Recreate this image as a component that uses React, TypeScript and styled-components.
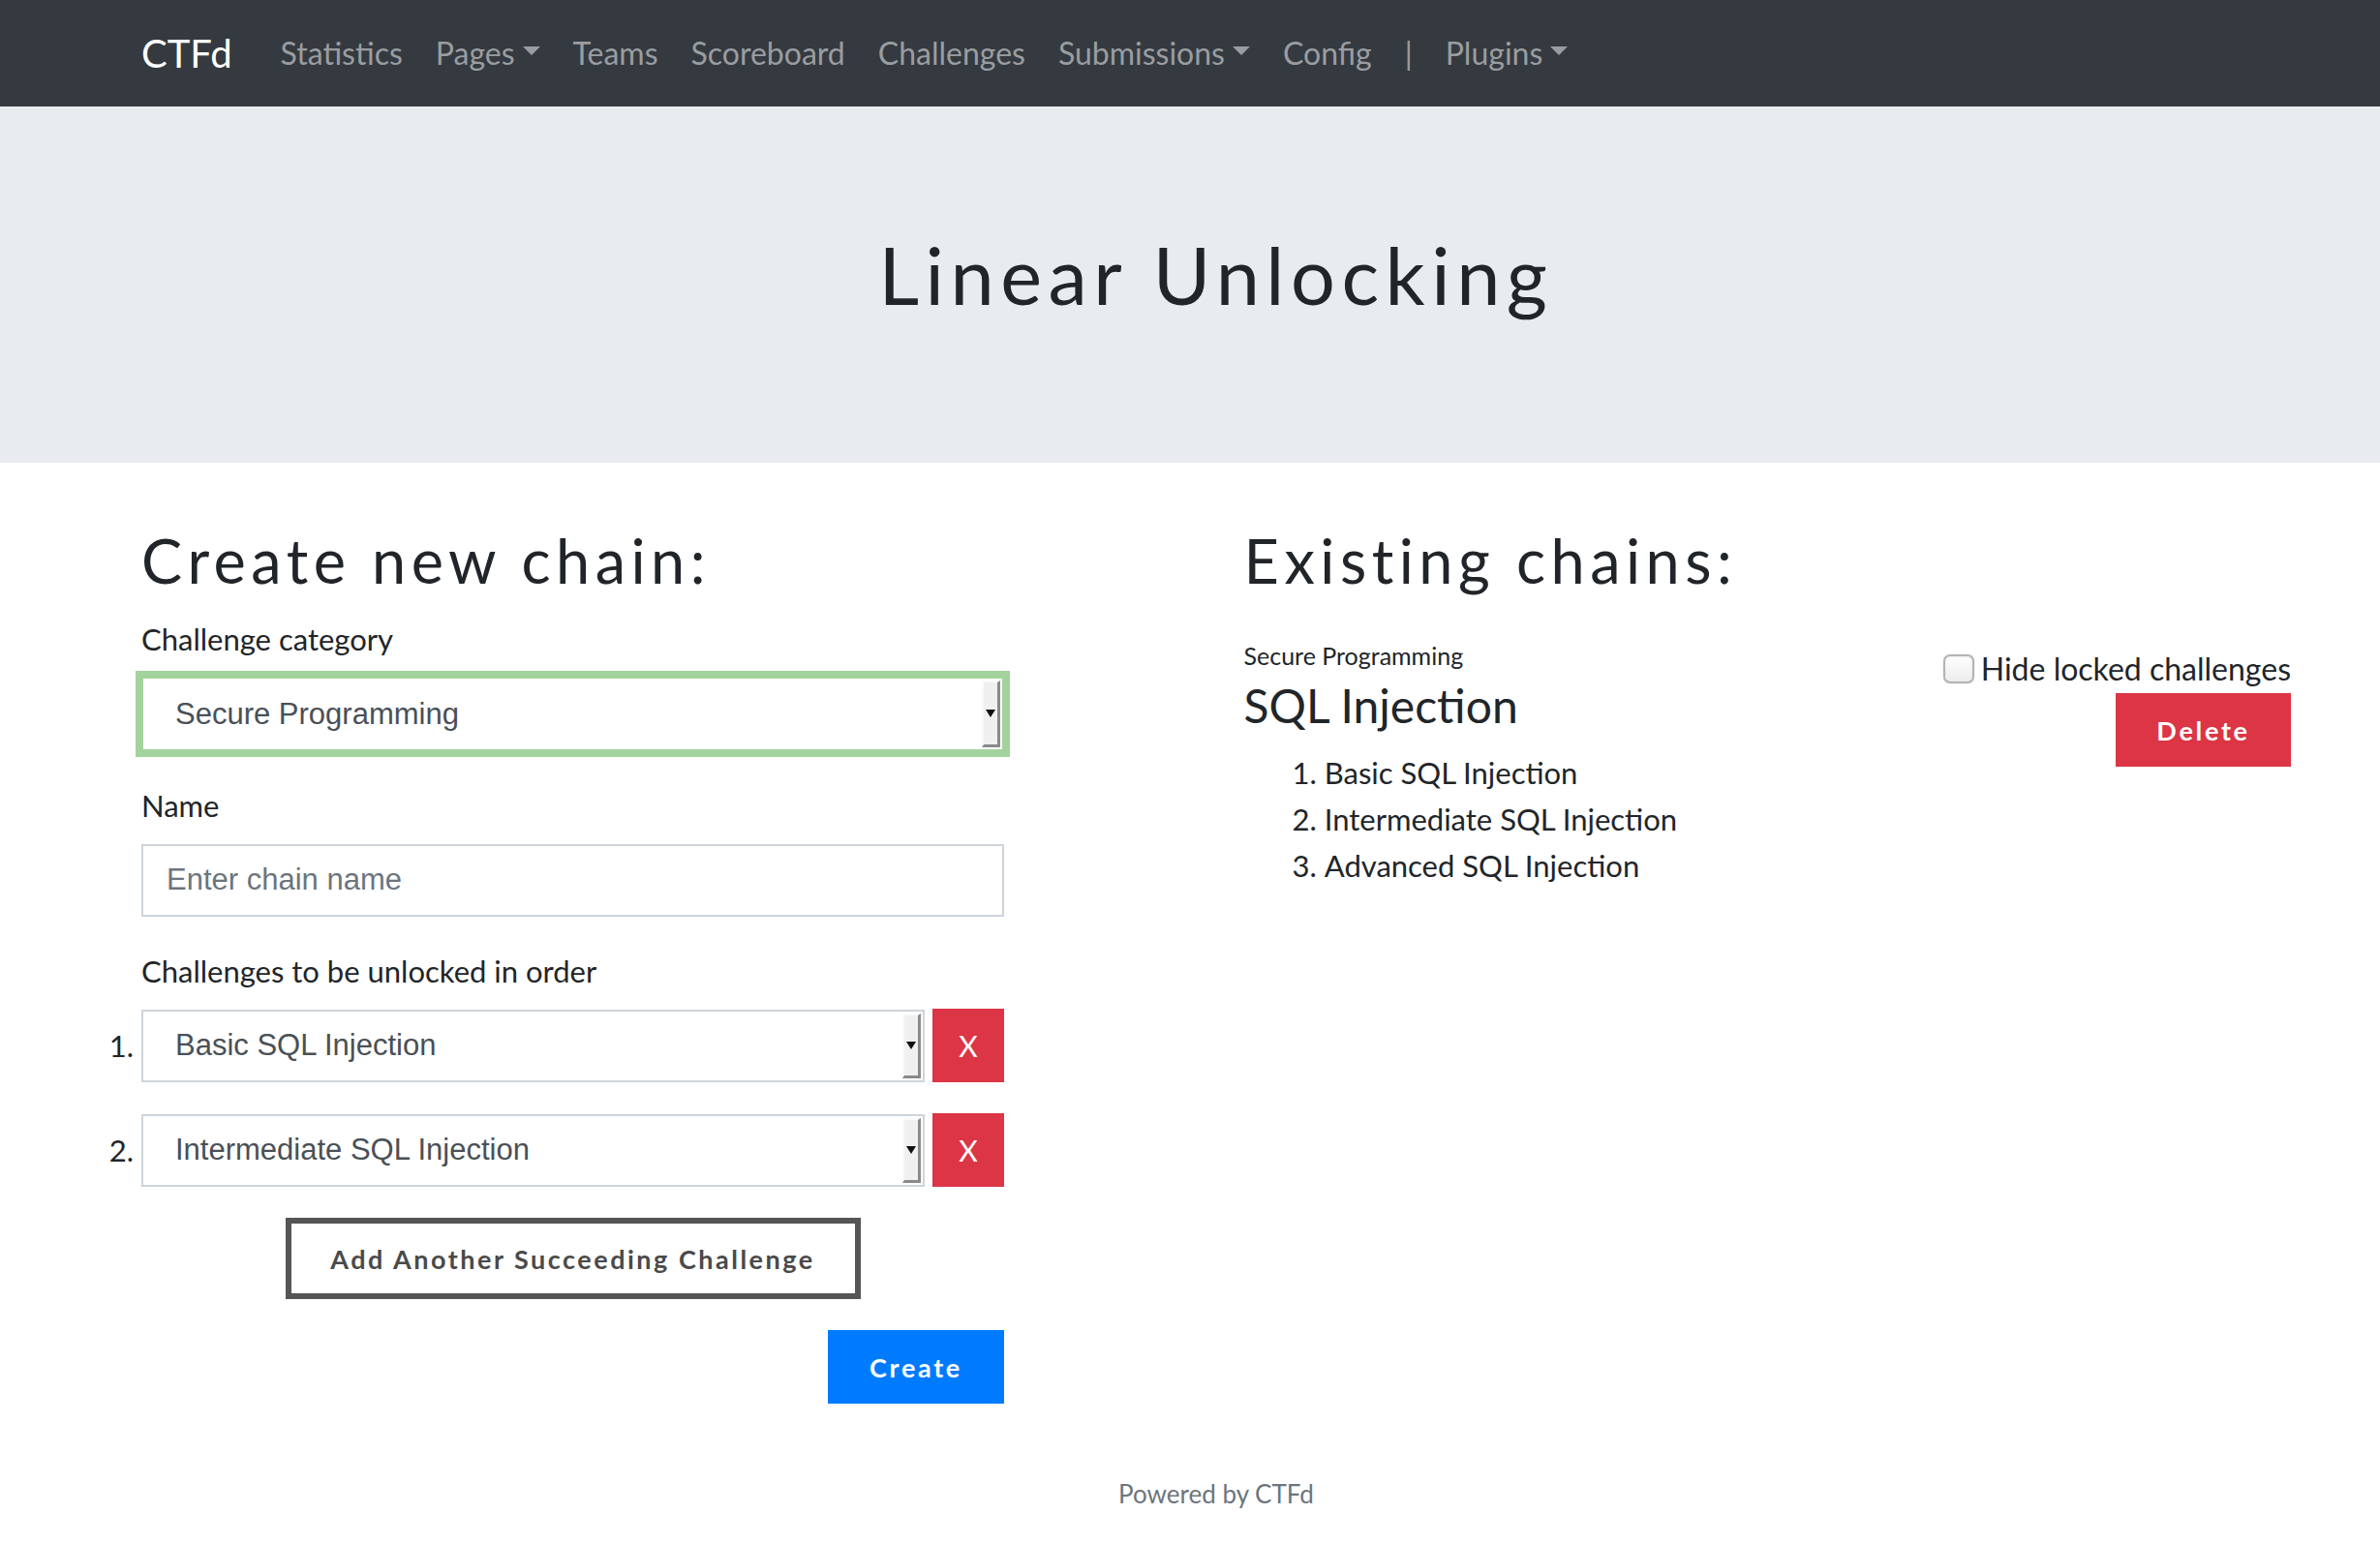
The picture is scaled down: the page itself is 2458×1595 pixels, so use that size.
import React from "react";
import styled, { createGlobalStyle } from "styled-components";

const GlobalStyle = createGlobalStyle`
  html, body {
    margin: 0;
    padding: 0;
    background: #ffffff;
  }
  body {
    font-family: Lato, "Noto Sans", "Liberation Sans", sans-serif;
    color: #212529;
    -webkit-font-smoothing: antialiased;
  }
  * { box-sizing: border-box; }
`;

const Page = styled.div`
  width: 2458px;
  min-height: 1595px;
  display: flex;
  flex-direction: column;
`;

const Container = styled.div`
  padding-left: 146px;
  padding-right: 92px;
`;

const NavBar = styled.nav`
  height: 110px;
  background: #343a40;
`;

const NavInner = styled(Container)`
  height: 100%;
  display: flex;
  align-items: center;
`;

const Brand = styled.a`
  font-size: 40px;
  line-height: 1.5;
  color: #ffffff;
  margin-right: 33px;
  text-decoration: none;
`;

const NavLink = styled.a<{ $dropdown?: boolean }>`
  font-size: 32px;
  line-height: 1.5;
  padding: 0 17px;
  color: #9a9da0;
  text-decoration: none;
  white-space: nowrap;
  ${(p) =>
    p.$dropdown &&
    `
    &::after {
      content: "";
      display: inline-block;
      margin-left: 8px;
      vertical-align: 0.3em;
      border-top: 9px solid #9a9da0;
      border-left: 9.5px solid transparent;
      border-right: 9.5px solid transparent;
      border-bottom: 0;
    }
  `}
`;

const Jumbotron = styled.header`
  height: 368px;
  background: #e9ecef;
  padding-top: 125px;
`;

const Title = styled.h1`
  margin: 0;
  text-align: center;
  font-size: 81px;
  font-weight: 400;
  line-height: 1.2;
  letter-spacing: 6.5px;
  color: #212529;
`;

const Main = styled(Container)`
  padding-top: 63px;
`;

const Columns = styled.div`
  display: grid;
  grid-template-columns: 1fr 1fr;
  column-gap: 57px;
  align-items: start;
`;

const Column = styled.section`
  display: flex;
  flex-direction: column;
`;

const Heading = styled.h1`
  margin: 0 0 20px 0;
  font-size: 63px;
  font-weight: 400;
  line-height: 1.2;
  letter-spacing: 5.5px;
  color: #212529;
`;

const Form = styled.form`
  width: 891px;
  display: flex;
  flex-direction: column;
`;

const FormGroup = styled.div<{ $last?: boolean }>`
  display: flex;
  flex-direction: column;
  margin-bottom: ${(p) => (p.$last ? "0" : "33px")};
`;

const Label = styled.label`
  font-size: 31px;
  line-height: 46.5px;
  margin-bottom: 16px;
  color: #212529;
`;

const SelectBox = styled.div<{ $focus?: boolean }>`
  width: 100%;
  min-width: 0;
  flex: 0 1 auto;
  height: ${(p) => (p.$focus ? "77px" : "75px")};
  display: flex;
  align-items: center;
  background: #ffffff;
  border: 2px solid ${(p) => (p.$focus ? "#a3d39c" : "#ced4da")};
  box-shadow: ${(p) => (p.$focus ? "0 0 0 6px #a3d39c" : "none")};
  padding-left: 33px;
  padding-right: 2px;
  font-family: "Liberation Sans", Arial, sans-serif;
  font-size: 31px;
  color: #495057;
`;

const SelectText = styled.span`
  flex: 1;
  white-space: nowrap;
`;

const SpinButton = styled.span`
  align-self: stretch;
  width: 19px;
  margin: 2px 0;
  background: #f0f0f0;
  border-top: 2px solid #fafafa;
  border-left: 2px solid #fafafa;
  border-right: 3px solid #8a8a8a;
  border-bottom: 3px solid #8a8a8a;
  display: flex;
  align-items: center;
  justify-content: center;
  &::before {
    content: "";
    border-top: 8px solid #111;
    border-left: 5px solid transparent;
    border-right: 5px solid transparent;
  }
`;

const TextInput = styled.input`
  height: 75px;
  width: 100%;
  border: 2px solid #ced4da;
  padding: 0 24px;
  font-family: "Liberation Sans", Arial, sans-serif;
  font-size: 31px;
  color: #495057;
  outline: none;
  &::placeholder {
    color: #6c757d;
  }
`;

const ChallengeRow = styled.div`
  display: flex;
  align-items: center;
  gap: 8px;
  margin-bottom: 32px;
`;

const RowNumber = styled.span`
  flex-shrink: 0;
  width: 30px;
  margin-left: -38px;
  font-size: 31px;
  text-align: right;
  color: #212529;
`;

const RemoveButton = styled.button`
  flex-shrink: 0;
  width: 74px;
  height: 76px;
  border: none;
  background: #dc3545;
  color: #ffffff;
  font-family: Lato, sans-serif;
  font-size: 30px;
  padding: 0;
`;

const OutlineButton = styled.button`
  align-self: center;
  width: 594px;
  height: 84px;
  background: #ffffff;
  border: 6px solid #555555;
  color: #4a4a4a;
  font-family: Lato, sans-serif;
  font-weight: 700;
  font-size: 27px;
  letter-spacing: 2.5px;
  padding: 0;
`;

const SolidButton = styled.button<{ $color: string; $width: number }>`
  width: ${(p) => p.$width}px;
  height: 76px;
  border: none;
  background: ${(p) => p.$color};
  color: #ffffff;
  font-family: Lato, sans-serif;
  font-weight: 700;
  font-size: 27px;
  letter-spacing: 2.7px;
  padding: 0;
`;

const CreateRow = styled.div`
  display: flex;
  justify-content: flex-end;
  margin-top: 32px;
`;

const ChainBlock = styled.div`
  margin-top: 22px;
  display: flex;
  justify-content: space-between;
  align-items: flex-start;
`;

const ChainInfo = styled.div`
  display: flex;
  flex-direction: column;
`;

const ChainCategory = styled.div`
  font-size: 25px;
  line-height: 37.5px;
  color: #212529;
`;

const ChainTitle = styled.h3`
  margin: 4px 0 16px 0;
  font-size: 48px;
  font-weight: 400;
  line-height: 1.2;
  color: #212529;
`;

const ChainList = styled.ol`
  margin: 0;
  padding-left: 50px;
  list-style-position: inside;
  font-size: 31px;
  line-height: 48px;
  color: #212529;
`;

const ChainActions = styled.div`
  display: flex;
  flex-direction: column;
  align-items: flex-end;
  padding-top: 9px;
`;

const CheckRow = styled.label`
  display: flex;
  align-items: center;
  gap: 7px;
  font-size: 32px;
  line-height: 46.5px;
  color: #212529;
  margin-bottom: 2px;
`;

const CheckBox = styled.span`
  width: 32px;
  height: 30px;
  border: 2px solid #b4b4b4;
  border-radius: 7px;
  background: linear-gradient(#ffffff, #ececec);
  box-shadow: 0 0 1px rgba(0, 0, 0, 0.35), inset 0 1px 2px rgba(0, 0, 0, 0.08);
`;

const Footer = styled(Container)`
  padding-top: 73px;
  padding-bottom: 32px;
  text-align: center;
  font-size: 26px;
  line-height: 40.5px;
  color: #6c757d;
`;

const Select = ({ value, focus }: { value: string; focus?: boolean }) => (
  <SelectBox $focus={focus}>
    <SelectText>{value}</SelectText>
    <SpinButton />
  </SelectBox>
);

const navItems: { label: string; dropdown?: boolean }[] = [
  { label: "Statistics" },
  { label: "Pages", dropdown: true },
  { label: "Teams" },
  { label: "Scoreboard" },
  { label: "Challenges" },
  { label: "Submissions", dropdown: true },
  { label: "Config" },
  { label: "|" },
  { label: "Plugins", dropdown: true },
];

const rows = ["Basic SQL Injection", "Intermediate SQL Injection"];
const chain = ["Basic SQL Injection", "Intermediate SQL Injection", "Advanced SQL Injection"];

export default function App() {
  return (
    <>
      <GlobalStyle />
      <Page>
        <NavBar>
          <NavInner>
            <Brand>CTFd</Brand>
            {navItems.map((n) => (
              <NavLink key={n.label} $dropdown={n.dropdown}>
                {n.label}
              </NavLink>
            ))}
          </NavInner>
        </NavBar>
        <Jumbotron>
          <Container>
            <Title>Linear Unlocking</Title>
          </Container>
        </Jumbotron>
        <Main>
          <Columns>
            <Column>
              <Heading>Create new chain:</Heading>
              <Form onSubmit={(e) => e.preventDefault()}>
                <FormGroup>
                  <Label>Challenge category</Label>
                  <Select value="Secure Programming" focus />
                </FormGroup>
                <FormGroup>
                  <Label>Name</Label>
                  <TextInput placeholder="Enter chain name" />
                </FormGroup>
                <FormGroup $last>
                  <Label>Challenges to be unlocked in order</Label>
                  {rows.map((r, i) => (
                    <ChallengeRow key={r}>
                      <RowNumber>{i + 1}.</RowNumber>
                      <Select value={r} />
                      <RemoveButton type="button">X</RemoveButton>
                    </ChallengeRow>
                  ))}
                </FormGroup>
                <OutlineButton type="button">Add Another Succeeding Challenge</OutlineButton>
                <CreateRow>
                  <SolidButton type="submit" $color="#007bff" $width={182}>
                    Create
                  </SolidButton>
                </CreateRow>
              </Form>
            </Column>
            <Column>
              <Heading>Existing chains:</Heading>
              <ChainBlock>
                <ChainInfo>
                  <ChainCategory>Secure Programming</ChainCategory>
                  <ChainTitle>SQL Injection</ChainTitle>
                  <ChainList>
                    {chain.map((c) => (
                      <li key={c}>{c}</li>
                    ))}
                  </ChainList>
                </ChainInfo>
                <ChainActions>
                  <CheckRow>
                    <CheckBox />
                    Hide locked challenges
                  </CheckRow>
                  <SolidButton type="button" $color="#dc3545" $width={181}>
                    Delete
                  </SolidButton>
                </ChainActions>
              </ChainBlock>
            </Column>
          </Columns>
        </Main>
        <Footer>Powered by CTFd</Footer>
      </Page>
    </>
  );
}
